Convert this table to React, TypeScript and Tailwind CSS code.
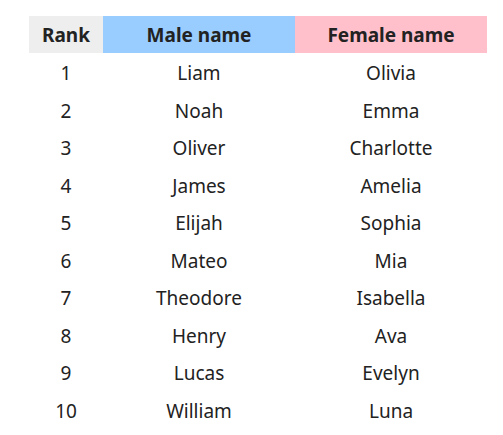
const rows: [number, string, string][] = [
  [1, "Liam", "Olivia"],
  [2, "Noah", "Emma"],
  [3, "Oliver", "Charlotte"],
  [4, "James", "Amelia"],
  [5, "Elijah", "Sophia"],
  [6, "Mateo", "Mia"],
  [7, "Theodore", "Isabella"],
  [8, "Henry", "Ava"],
  [9, "Lucas", "Evelyn"],
  [10, "William", "Luna"],
];

export default function App() {
  return (
    <div
      className="w-[503px] h-[435px] bg-white pt-[16px] pl-[29px] text-[#222] text-[19px] leading-none"
      style={{ fontFamily: '"Noto Sans", "Noto Sans CJK KR", sans-serif' }}
    >
      <div className="grid grid-cols-[74px_192px_192px] w-[458px]">
        <div className="h-[37px] pt-[2px] flex items-center justify-center bg-[#eeeeee] font-bold">Rank</div>
        <div className="h-[37px] pt-[2px] flex items-center justify-center bg-[#99ccff] font-bold">Male name</div>
        <div className="h-[37px] pt-[2px] flex items-center justify-center bg-[#ffc0cb] font-bold">Female name</div>
        {rows.map(([r, m, f]) => (
          <div key={r} className="contents">
            <div className="h-[37.5px] pt-[4px] flex items-center justify-center">{r}</div>
            <div className="h-[37.5px] pt-[4px] flex items-center justify-center">{m}</div>
            <div className="h-[37.5px] pt-[4px] flex items-center justify-center">{f}</div>
          </div>
        ))}
      </div>
    </div>
  );
}
